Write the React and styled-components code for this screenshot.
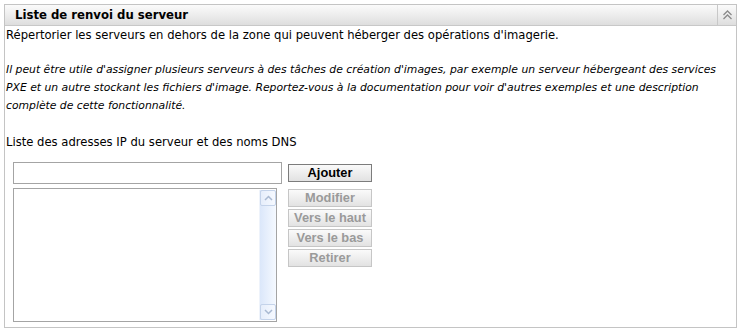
import React from "react";
import styled, { createGlobalStyle } from "styled-components";

const Global = createGlobalStyle`
  html, body { margin: 0; padding: 0; background: #fff; }
  body { font-family: "DejaVu Sans", Verdana, sans-serif; color: #000; }
`;

const Panel = styled.section`
  box-sizing: border-box;
  margin: 4px 0 0 4px;
  width: 733px;
  height: 324px;
  border: 1px solid #c4c4c4;
  display: flex;
  flex-direction: column;
`;

const Header = styled.header`
  display: flex;
  align-items: stretch;
  height: 20px;
  border-bottom: 1px solid #c8c8c8;
  background: linear-gradient(#fbfbfb, #dedede);
`;

const Title = styled.h2`
  flex: 1;
  margin: 0;
  padding-left: 10px;
  font-family: "DejaVu Sans", Verdana, sans-serif;
  font-size: 11.7px;
  font-weight: bold;
  line-height: 20px;
  color: #000;
`;

const Collapse = styled.div`
  width: 18px;
  border-left: 1px solid #c8c8c8;
  display: flex;
  align-items: center;
  justify-content: center;
`;

const Body = styled.div`
  padding-left: 1px;
  font-size: 11.6px;
  line-height: 18px;
`;

const Intro = styled.p`
  margin: 0;
`;

const Note = styled.p`
  margin: 17px 0 0;
  font-style: italic;
  font-size: 10.8px;
`;

const Label = styled.p`
  margin: 18px 0 0;
`;

const FormRow = styled.div`
  display: flex;
  margin-top: 11px;
  padding-left: 7px;
`;

const LeftCol = styled.div`
  display: flex;
  flex-direction: column;
  gap: 4px;
`;

const TextInput = styled.input`
  box-sizing: border-box;
  width: 269px;
  height: 22px;
  margin: 0;
  border: 1px solid #a4a4a4;
  padding: 0 3px;
  font: inherit;
  outline: none;
`;

const ListBox = styled.div`
  box-sizing: border-box;
  width: 264px;
  height: 134px;
  border: 1px solid #a4a4a4;
  display: flex;
  justify-content: flex-end;
  padding: 1px 0;
`;

const ScrollBar = styled.div`
  width: 16px;
  display: flex;
  flex-direction: column;
  justify-content: space-between;
  background: linear-gradient(to right, #dbe7fa, #f5f9ff);
  border-left: 1px solid #eef3fb;
`;

const ScrollBtn = styled.div`
  box-sizing: border-box;
  height: 16px;
  border: 1px solid #c4d3ea;
  border-radius: 2px;
  background: linear-gradient(to right, #e6eefb, #f6f9ff);
  display: flex;
  align-items: center;
  justify-content: center;
`;

const ButtonCol = styled.div`
  display: flex;
  flex-direction: column;
  margin-left: 6px;
  padding-top: 2px;
`;

const Btn = styled.button`
  box-sizing: border-box;
  width: 84px;
  height: 18px;
  margin: 0 0 ${(p) => p.$gap}px;
  padding: 0;
  border: 1px solid ${(p) => (p.disabled ? "#c6c6c6" : "#7c7c7c")};
  background: linear-gradient(#fafafa, #e2e2e2);
  font-family: "Liberation Sans", Arial, sans-serif;
  font-size: 12.8px;
  font-weight: bold;
  line-height: 16px;
  color: ${(p) => (p.disabled ? "#9a9a9a" : "#000")};
`;

const Chevron = ({ up }) => (
  <svg width="9" height="6" viewBox="0 0 9 6">
    <path
      d={up ? "M1 5 L4.5 1.5 L8 5" : "M1 1 L4.5 4.5 L8 1"}
      fill="none"
      stroke="#a9b9d2"
      strokeWidth="1.5"
    />
  </svg>
);

export default function App() {
  return (
    <>
      <Global />
      <Panel>
        <Header>
          <Title>Liste de renvoi du serveur</Title>
          <Collapse>
            <svg width="11" height="10" viewBox="0 0 11 10">
              <path d="M1.5 5 L5.5 1 L9.5 5 M1.5 9 L5.5 5 L9.5 9" fill="none" stroke="#8a8a8a" strokeWidth="1.3" />
            </svg>
          </Collapse>
        </Header>
        <Body>
          <Intro>
            Répertorier les serveurs en dehors de la zone qui peuvent héberger des opérations d'imagerie.
          </Intro>
          <Note>
            Il peut être utile d'assigner plusieurs serveurs à des tâches de création d'images, par exemple un serveur hébergeant des services
            <br />
            PXE et un autre stockant les fichiers d'image. Reportez-vous à la documentation pour voir d'autres exemples et une description
            <br />
            complète de cette fonctionnalité.
          </Note>
          <Label>Liste des adresses IP du serveur et des noms DNS</Label>
          <FormRow>
            <LeftCol>
              <TextInput type="text" />
              <ListBox>
                <ScrollBar>
                  <ScrollBtn><Chevron up /></ScrollBtn>
                  <ScrollBtn><Chevron /></ScrollBtn>
                </ScrollBar>
              </ListBox>
            </LeftCol>
            <ButtonCol>
              <Btn $gap={7}>Ajouter</Btn>
              <Btn disabled $gap={2}>Modifier</Btn>
              <Btn disabled $gap={2}>Vers le haut</Btn>
              <Btn disabled $gap={2}>Vers le bas</Btn>
              <Btn disabled $gap={0}>Retirer</Btn>
            </ButtonCol>
          </FormRow>
        </Body>
      </Panel>
    </>
  );
}
